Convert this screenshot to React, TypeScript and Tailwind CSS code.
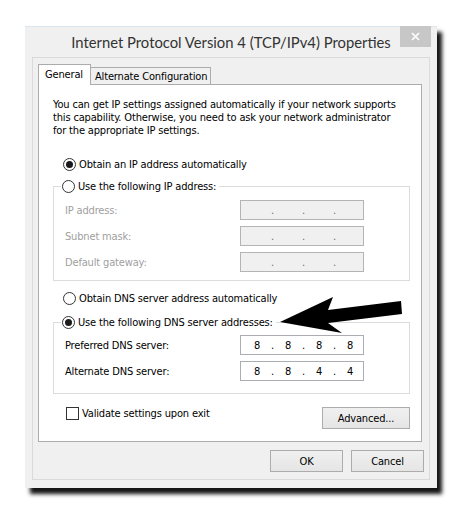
import React from "react"

// Windows 8 style TCP/IPv4 properties dialog, with the black annotation arrow

const ui = "font-['DejaVu_Sans_Condensed','DejaVu_Sans',sans-serif] text-[11px] leading-[13px] tracking-[-0.16px]"

function Radio({ checked, label, dim }: { checked?: boolean; label: string; dim?: boolean }) {
  return (
    <span className="flex items-center gap-[3px]">
      <span className="flex h-[13px] w-[13px] items-center justify-center rounded-full border border-[#333333] bg-white">
        {checked && <span className="h-[7px] w-[7px] rounded-full bg-[#1b1b1b]" />}
      </span>
      <span className={dim ? "text-[#a0a0a0]" : "text-black"}>{label}</span>
    </span>
  )
}

function IpField({ value, disabled }: { value?: string[]; disabled?: boolean }) {
  const parts = value ?? ["", "", "", ""]
  return (
    <div
      className={
        "flex h-[20px] w-[124px] items-center border pl-[3px] " +
        (disabled ? "border-[#b4b4b4] bg-[#f0f0f0] text-[#6d6d6d]" : "border-[#abadb3] bg-white text-black")
      }
    >
      {parts.map((p, i) => (
        <React.Fragment key={i}>
          <span className="w-[26px] text-center">{p}</span>
          {i < 3 && <span className="w-[5px] text-center">.</span>}
        </React.Fragment>
      ))}
    </div>
  )
}

function Row({ label, children, dim }: { label: string; children: React.ReactNode; dim?: boolean }) {
  return (
    <div className="flex items-center">
      <span className={"w-[186px] pl-[11px] " + (dim ? "text-[#a0a0a0]" : "text-black")}>{label}</span>
      {children}
    </div>
  )
}

function Button({ children, w }: { children: React.ReactNode; w: string }) {
  return (
    <button
      className={
        "flex h-[22px] items-center justify-center border border-[#acacac] bg-gradient-to-b from-[#f0f0f0] to-[#e5e5e5] text-black " +
        w
      }
    >
      {children}
    </button>
  )
}

export default function App() {
  return (
    <div className={"relative h-[513px] w-[463px] overflow-hidden bg-white pl-[25px] pt-[26px] " + ui}>
      <div className="h-[462px] w-[412px] border-t border-[#dbe6ef] bg-[#f0f0f0] shadow-[5px_6px_4px_rgba(0,0,0,0.92)]">
        {/* title bar */}
        <div className="relative flex h-[30px] items-center justify-center">
          <span className="font-['Lato',sans-serif] text-[14.8px] leading-none tracking-normal text-[#333333]">
            Internet Protocol Version 4 (TCP/IPv4) Properties
          </span>
          <button className="absolute right-[6px] top-[-1px] flex h-[21px] w-[31px] items-center justify-center bg-[#c7c7c7]">
            <svg width="9" height="9" viewBox="0 0 9 9">
              <path d="M1 1 L8 8 M8 1 L1 8" stroke="white" strokeWidth="1.6" />
            </svg>
          </button>
        </div>

        {/* client area */}
        <div className="ml-[7px] h-[423px] w-[398px] border border-[#dadada] px-[5px] pt-[6px]">
          <div className="flex h-[20px] items-end whitespace-nowrap">
            <div className="relative z-10 mb-[-1px] flex h-[21px] w-[53px] items-start border border-b-0 border-[#acacac] bg-white pl-[6px] pt-[3px]">
              General
            </div>
            <div className="flex h-[17px] w-[120px] items-start border-r border-t border-[#acacac] bg-[#f0f0f0] pl-[4px] pt-[2px]">
              Alternate Configuration
            </div>
          </div>

          <div className="h-[358px] w-[384px] border border-[#acacac] bg-white pt-[13px]">
            <p className="pl-[14px]">
              You can get IP settings assigned automatically if your network supports
              <br />
              this capability. Otherwise, you need to ask your network administrator
              <br />
              for the appropriate IP settings.
            </p>

            <div className="ml-[24px] mt-[21px]">
              <Radio checked label="Obtain an IP address automatically" />
            </div>

            <fieldset className="ml-[14px] mt-[9px] w-[357px] border border-[#dcdcdc] pb-[8px]">
              <legend className="ml-[7px] bg-white pl-[1px] pr-[3px]">
                <Radio label="Use the following IP address:" />
              </legend>
              <div className="mt-[7px] flex flex-col gap-[6px]">
                <Row label="IP address:" dim>
                  <IpField disabled />
                </Row>
                <Row label="Subnet mask:" dim>
                  <IpField disabled />
                </Row>
                <Row label="Default gateway:" dim>
                  <IpField disabled />
                </Row>
              </div>
            </fieldset>

            <div className="ml-[24px] mt-[11px]">
              <Radio label="Obtain DNS server address automatically" />
            </div>

            <fieldset className="ml-[14px] mt-[11px] w-[357px] border border-[#dcdcdc] pb-[12px]">
              <legend className="ml-[7px] bg-white pl-[1px] pr-[3px]">
                <Radio checked label="Use the following DNS server addresses:" />
              </legend>
              <div className="mt-[6px] flex flex-col gap-[6px]">
                <Row label="Preferred DNS server:">
                  <IpField value={["8", "8", "8", "8"]} />
                </Row>
                <Row label="Alternate DNS server:">
                  <IpField value={["8", "8", "4", "4"]} />
                </Row>
              </div>
            </fieldset>

            <div className="ml-[27px] mt-[13px] flex w-[344px] items-start justify-between">
              <span className="flex items-center gap-[3px]">
                <span className="h-[13px] w-[13px] border border-[#333333] bg-white" />
                Validate settings upon exit
              </span>
              <Button w="w-[88px]">Advanced...</Button>
            </div>
          </div>

          <div className="mt-[8px] flex justify-end gap-[8px]">
            <Button w="w-[73px]">OK</Button>
            <Button w="w-[73px]">Cancel</Button>
          </div>
        </div>
      </div>

      {/* annotation arrow drawn over the dialog */}
      <svg className="pointer-events-none absolute left-0 top-0" width="463" height="513">
        <polygon points="280,322 333,297 328,310 401,301 402,314 328,323 342,333" fill="black" />
      </svg>
    </div>
  )
}
